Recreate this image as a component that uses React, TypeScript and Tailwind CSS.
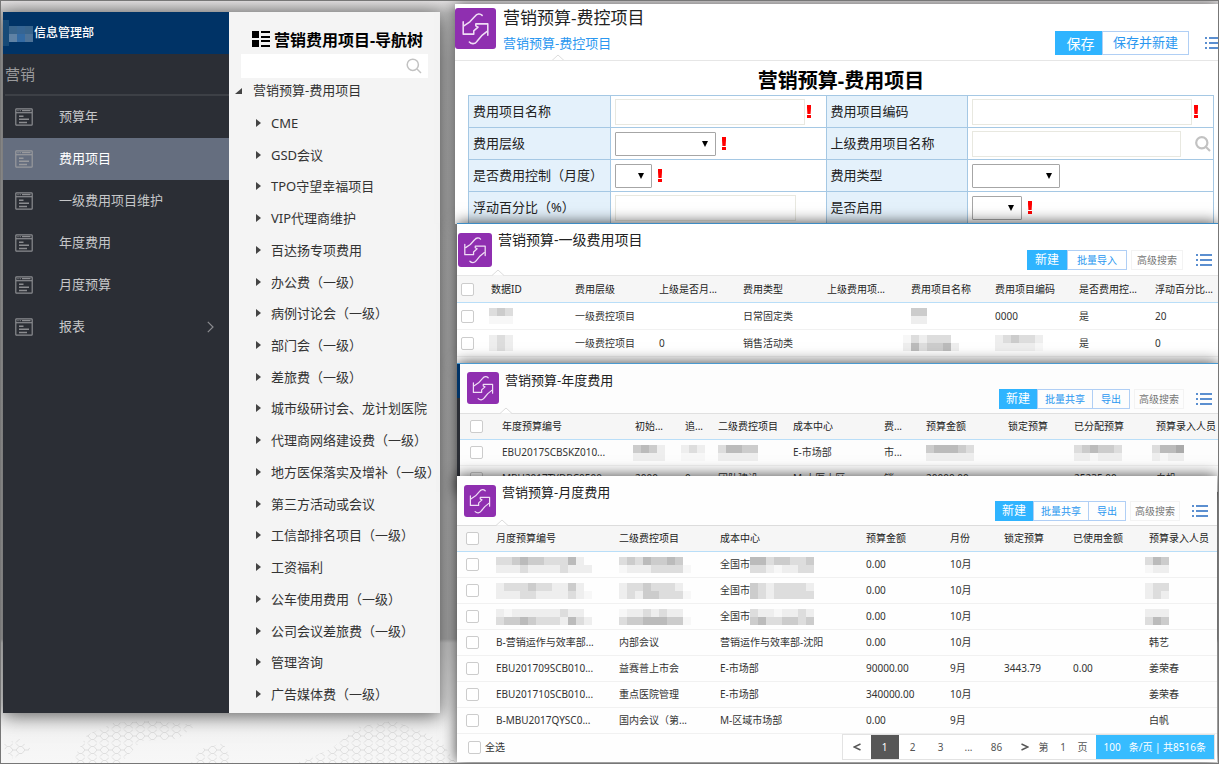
import React from "react";

const FONT = "font-['Noto_Sans','Noto_Sans_CJK_SC',sans-serif]";

function AppMark({ className }: { className: string }) {
  return (
    <span className={`flex shrink-0 items-center justify-center rounded-[3px] bg-[#8f2fb0] ${className}`}>
      <svg viewBox="0 0 40 40" className="h-full w-full" fill="none" stroke="#f0def5" strokeWidth="1.5" strokeLinejoin="round" strokeLinecap="round" aria-hidden="true">
        <path d="M26.5 7.2C24.5 5.2 21.5 5.4 19.5 8L14.5 13.5L9 17.2" />
        <path d="M8 13.5V25.5H18.3V22.3L22.5 18.6L20.3 17.4V15.5H32V26.5" />
        <path d="M31 23L26 27L21.5 32.5C19.5 35.4 16 35.4 14 33.2" />
      </svg>
    </span>
  );
}

function Notch({ className }: { className: string }) {
  return (
    <svg viewBox="0 0 12 7" className={`absolute -bottom-px h-[7px] w-3 ${className}`} aria-hidden="true">
      <path d="M0 6.5L6 1L12 6.5" fill="#fff" stroke="#dcdcdc" />
    </svg>
  );
}

function ListIcon() {
  return (
    <svg viewBox="0 0 16 14" className="h-3.5 w-4 shrink-0" fill="#5b8fd0" role="img" aria-label="列表">
      <path d="M0 1h2v2H0zM4 1h12v2H4zM0 6h2v2H0zM4 6h12v2H4zM0 11h2v2H0zM4 11h12v2H4z" />
    </svg>
  );
}

function SearchIcon({ className, width }: { className: string; width: number }) {
  return (
    <svg viewBox="0 0 16 16" className={className} fill="none" stroke="#c2c2c2" strokeWidth={width} aria-hidden="true">
      <circle cx="6.8" cy="6.8" r="5.6" />
      <path d="M11 11l4 4" />
    </svg>
  );
}

/* Faint honeycomb printed on the desktop behind the windows. */
function Honeycomb() {
  return (
    <svg className="absolute bottom-0 left-0 h-12 w-[455px]" aria-hidden="true">
      <defs>
        <pattern id="comb" width="12" height="14" patternUnits="userSpaceOnUse">
          <path d="M3 0.5L6 3.5L9 3.5L12 0.5M6 3.5L3 7L6 10.5H9L12 7L9 3.5M0 7H3M3 13.5L6 10.5M9 10.5L12 13.5" fill="none" stroke="#dedede" />
        </pattern>
      </defs>
      <path d="M70 48L86 20L112 8L150 6L196 10L176 24L140 26L120 48Z" fill="url(#comb)" />
      <path d="M190 48L200 34L222 28L232 48Z" fill="url(#comb)" />
      <path d="M296 48L330 34L356 12L392 6L420 16L440 26L455 48Z" fill="url(#comb)" />
      <path d="M0 30L18 24L30 34L12 44Z" fill="url(#comb)" />
    </svg>
  );
}

/* A masked value: each hex digit is the grey level of one 8px block. */
function Mask({ rows, className = "" }: { rows: string[]; className?: string }) {
  const w = Math.max(...rows.map((r) => r.length)) * 8;
  const h = rows.length * 8;
  return (
    <svg width={w} height={h} viewBox={`0 0 ${w} ${h}`} className={`inline-block shrink-0 align-middle ${className}`} shapeRendering="crispEdges" aria-hidden="true">
      {rows.map((row, y) =>
        row.split("").map((c, x) => (
          <rect key={`${x}-${y}`} x={x * 8} y={y * 8} width="8" height="8" fill={c === "f" ? "#f7f7f7" : `#${c}${c}${c}`} />
        ))
      )}
    </svg>
  );
}

function Check({ label }: { label: string }) {
  return (
    <input type="checkbox" aria-label={label} className="block h-[13px] w-[13px] appearance-none rounded-[2px] border border-[#cccccc] bg-white checked:bg-[#2fb4ff]" />
  );
}

const MENU = ["预算年", "费用项目", "一级费用项目维护", "年度费用", "月度预算", "报表"];

function Sidebar() {
  return (
    <nav className="w-[226px] shrink-0 bg-[#2b2e35]">
      <div className="flex h-[42px] items-center bg-[#003366] text-[12px] font-medium text-white">
        <svg width="31" height="26" viewBox="0 0 31 26" className="shrink-0" shapeRendering="crispEdges" aria-hidden="true">
          <path fill="#174a77" d="M0 0h6v26H0z" />
          <path fill="#38648c" d="M6 6h8v8H6zM22 6h8v8h-8z" />
          <path fill="#366593" d="M14 6h8v8h-8z" />
          <path fill="#4d7297" d="M22 14h8v8h-8z" />
          <path fill="#5f82a5" d="M6 14h8v8H6z" />
          <path fill="#336aa3" d="M14 14h8v8h-8z" />
        </svg>
        <span>信息管理部</span>
      </div>
      <div className="ml-0.5 flex h-[42px] items-center border-b-2 border-[#3d4046] text-[15px] text-[#9a9a9c]">营销</div>
      <ul>
        {MENU.map((m, i) => (
          <li key={m}>
            <a href="#" className={`flex h-[42px] items-center pl-3 pr-[15px] text-[13px] ${i === 1 ? "bg-[#656e7f] text-white" : "text-[#c6c7c9]"}`}>
              <svg viewBox="0 0 18 18" className="h-[18px] w-[18px] shrink-0" fill="none" stroke={i === 1 ? "#98999d" : "#8b8c90"} strokeWidth="1.2" aria-hidden="true">
                <rect x="0.8" y="0.8" width="16.4" height="16.4" rx="0.8" />
                <path d="M1 4.7h16" />
                <path d="M2.5 2.7h1M4.7 2.7h1M7 2.7h8.5" />
                <path d="M4 8.3h4.5M4 11.2h10M4 14.5h8" strokeWidth="1.5" />
              </svg>
              <span className="flex-1 pl-[26px]">{m}</span>
              {i === 5 && (
                <svg viewBox="0 0 7 12" className="h-3 w-[7px]" fill="none" stroke="#8b8c90" strokeWidth="1.2" aria-hidden="true">
                  <path d="M0.8 0.8L6 6L0.8 11.2" />
                </svg>
              )}
            </a>
          </li>
        ))}
      </ul>
    </nav>
  );
}

const TREE = [
  "CME", "GSD会议", "TPO守望幸福项目", "VIP代理商维护", "百达扬专项费用", "办公费（一级）", "病例讨论会（一级）",
  "部门会（一级）", "差旅费（一级）", "城市级研讨会、龙计划医院", "代理商网络建设费（一级）", "地方医保落实及增补（一级）",
  "第三方活动或会议", "工信部排名项目（一级）", "工资福利", "公车使用费用（一级）", "公司会议差旅费（一级）", "管理咨询", "广告媒体费（一级）",
];

function TreePanel() {
  return (
    <section className="flex w-[211px] shrink-0 flex-col bg-[#f4f4f4] pb-[3px]">
      <h2 className="flex h-[42px] items-end gap-1 whitespace-nowrap pl-[23px] text-[16px] font-bold leading-7 text-black">
        <svg viewBox="0 0 18 16" className="mb-[7px] h-4 w-[18px] shrink-0" aria-hidden="true">
          <path d="M0 0h7v7H0zM0 9h7v7H0zM9 0h9v2H9zM9 5h9v2H9zM9 9h9v2H9zM9 14h9v2H9z" />
        </svg>
        营销费用项目-导航树
      </h2>
      <label className="ml-3 mr-3 flex h-6 items-center bg-white pr-1.5">
        <input type="text" aria-label="搜索" className="min-w-0 flex-1 bg-transparent px-2 text-[13px] outline-none" />
        <SearchIcon className="h-4 w-4" width={1.5} />
      </label>
      <div className="mb-[3px] flex h-[26px] items-center pl-1.5 text-[13px] text-[#333]">
        <svg viewBox="0 0 7 6" className="h-1.5 w-[7px]" aria-hidden="true">
          <path d="M7 0V6H0z" fill="#444" />
        </svg>
        <span className="pl-[11px]">营销预算-费用项目</span>
      </div>
      <ul className="flex flex-1 flex-col text-[13px] leading-5 text-[#333]">
        {TREE.map((t) => (
          <li key={t} className="flex flex-1 items-center whitespace-nowrap pl-[27px]">
            <svg viewBox="0 0 5 8" className="mr-2.5 h-2 w-[5px] shrink-0" aria-hidden="true">
              <path d="M0 0L5 4L0 8z" fill="#444" />
            </svg>
            {t}
          </li>
        ))}
      </ul>
    </section>
  );
}

const Bang = () => (
  <svg viewBox="0 0 4 13" className="h-[13px] w-1 shrink-0" fill="#f00" aria-label="必填" role="img">
    <path d="M0 0h4v3L3.6 9H0.4L0 3zM0 10h4v3H0z" />
  </svg>
);

function Picker({ id, className }: { id: string; className: string }) {
  return (
    <span className={`relative inline-flex ${className}`}>
      <select id={id} className="h-6 w-full appearance-none rounded-[1px] border border-[#a6a6a6] bg-white">
        <option value=""></option>
      </select>
      <svg viewBox="0 0 6 6" className="pointer-events-none absolute right-2 top-[9px] h-1.5 w-1.5" aria-hidden="true">
        <path d="M0 0h6L3 6z" fill="#000" />
      </svg>
    </span>
  );
}

const TH = "border border-[#a5c8e4] bg-[#e4f1fb] pl-1 text-left font-normal";
const TD = "border border-[#a5c8e4] px-1";
const BOX = "h-[26px] min-w-0 border border-[#e8e8e0] bg-white px-1 outline-none";

function FormPanel() {
  return (
    <section className="relative bg-white shadow-[0_0_14px_rgba(0,0,0,0.55)]">
      <header className="relative flex h-[57px] overflow-hidden border-b border-[#e6e6e6]">
        <AppMark className="mt-1 h-[41px] w-[41px]" />
        <div className="flex-1 pl-[7px]">
          <h1 className="text-[17px] leading-7 text-[#222]">营销预算-费控项目</h1>
          <a href="#" className="block w-max text-[13px] leading-[22px] text-[#2a97f0]">营销预算-费控项目</a>
        </div>
        <div className="-mr-[3px] mt-[27px] flex h-6 items-center">
          <button type="button" className="h-full w-[47px] bg-[#2fb4ff] pl-1 text-[14px] text-white">保存</button>
          <button type="button" className="mr-4 h-full w-[87px] border border-[#b0cff5] text-[13px] text-[#2a97f0]">保存并新建</button>
          <ListIcon />
        </div>
        <Notch className="left-[97px]" />
      </header>
      <div className="pl-[13px] pr-1">
        <h2 className="h-[34px] text-center text-[20px] font-bold leading-10 text-black">营销预算-费用项目</h2>
        <table className="w-full table-fixed border-collapse text-[13px] text-[#222]">
          <colgroup>
            <col className="w-[19%]" />
            <col className="w-[29%]" />
            <col className="w-[19%]" />
            <col className="w-[33%]" />
          </colgroup>
          <tbody>
            <tr className="h-8">
              <th className={TH}><label htmlFor="name">费用项目名称</label></th>
              <td className={TD}><div className="flex items-center gap-0.5 pr-[11px]"><input id="name" className={`${BOX} flex-1`} /><Bang /></div></td>
              <th className={TH}><label htmlFor="code">费用项目编码</label></th>
              <td className={TD}><div className="flex items-center gap-0.5 pr-[11px]"><input id="code" className={`${BOX} flex-1`} /><Bang /></div></td>
            </tr>
            <tr className="h-8">
              <th className={TH}><label htmlFor="level">费用层级</label></th>
              <td className={TD}><div className="flex items-center gap-1.5"><Picker id="level" className="w-[101px]" /><Bang /></div></td>
              <th className={TH}><label htmlFor="parent">上级费用项目名称</label></th>
              <td className={TD}><div className="flex items-center gap-3.5"><input id="parent" className={`${BOX} flex-1`} /><SearchIcon className="-mr-0.5 h-4 w-4" width={2.2} /></div></td>
            </tr>
            <tr className="h-8">
              <th className={TH}><label htmlFor="control">是否费用控制（月度）</label></th>
              <td className={TD}><div className="flex items-center gap-1.5"><Picker id="control" className="w-[37px]" /><Bang /></div></td>
              <th className={TH}><label htmlFor="kind">费用类型</label></th>
              <td className={TD}><div className="flex items-center"><Picker id="kind" className="w-[88px]" /></div></td>
            </tr>
            <tr className="h-8">
              <th className={TH}><label htmlFor="float">浮动百分比（%）</label></th>
              <td className={TD}><div className="flex pr-[26px]"><input id="float" className={`${BOX} flex-1`} /></div></td>
              <th className={TH}><label htmlFor="enabled">是否启用</label></th>
              <td className={TD}><div className="flex items-center gap-1.5"><Picker id="enabled" className="w-[50px]" /><Bang /></div></td>
            </tr>
          </tbody>
        </table>
      </div>
    </section>
  );
}

function Actions({ items, className, search }: { items: { t: string; w: string }[]; className: string; search: string }) {
  return (
    <div className={`flex h-5 items-center text-[10px] ${className}`}>
      {items.map((b, i) => (
        <button key={b.t} type="button" className={`h-full ${b.w} ${i === 0 ? "bg-[#2fb4ff] text-[12px] leading-5 text-white" : i === 1 ? "border border-[#b0cff5] text-[#2a97f0]" : "border border-l-0 border-[#b0cff5] text-[#2a97f0]"}`}>
          {b.t}
        </button>
      ))}
      <button type="button" className={`ml-1 h-full border border-[#f3f3f3] text-[#777] ${search}`}>高级搜索</button>
      <ListIcon />
    </div>
  );
}

type Cell = React.ReactNode;

function DataTable({ cols, heads, rows, rowClass, headClass, padClass }: { cols: string[]; heads: string[]; rows: Cell[][]; rowClass: string; headClass: string; padClass: string }) {
  return (
    <table className="w-full table-fixed border-separate border-spacing-0 text-left text-[10px] text-[#333]">
      <colgroup>
        {cols.map((c, i) => (
          <col key={i} className={c} />
        ))}
      </colgroup>
      <thead>
        <tr className={`bg-[#f6f6f6] ${headClass}`}>
          <th className={`border-b border-[#b9def8] ${padClass}`}><Check label="选择全部" /></th>
          {heads.map((h) => (
            <th key={h} className="whitespace-nowrap border-b border-[#b9def8] font-normal text-[#222]">{h}</th>
          ))}
        </tr>
      </thead>
      <tbody>
        {rows.map((r, i) => (
          <tr key={i} className={rowClass}>
            <td className={`border-b border-[#f1f1f1] ${padClass}`}><Check label={`选择第${i + 1}行`} /></td>
            {r.map((c, j) => (
              <td key={j} className="whitespace-nowrap border-b border-[#f1f1f1]">{c}</td>
            ))}
          </tr>
        ))}
      </tbody>
    </table>
  );
}

function LevelOnePanel() {
  return (
    <section className="relative -mt-px ml-0.5 border-t border-[#3d8cc4] bg-white pb-1.5 shadow-[0_0_14px_rgba(0,0,0,0.75)]">
      <header className="relative flex h-[52px] border-b border-[#e6e6e6] pl-px">
        <AppMark className="mt-[9px] h-[34px] w-[34px]" />
        <h2 className="flex-1 pl-1.5 text-[14px] leading-8 text-[#222]">营销预算-一级费用项目</h2>
        <Actions className="mr-1.5 mt-[26px]" search="w-[52px] mr-[13px]" items={[{ t: "新建", w: "w-10" }, { t: "批量导入", w: "w-[60px]" }]} />
        <Notch className="left-[35px]" />
      </header>
      <DataTable
        headClass="h-[27px]"
        rowClass="h-[27px]"
        padClass="pl-1"
        cols={["w-[34px]", "w-[84px]", "w-[84px]", "w-[84px]", "w-[84px]", "w-[84px]", "w-[84px]", "w-[84px]", "w-[76px]", ""]}
        heads={["数据ID", "费用层级", "上级是否月...", "费用类型", "上级费用项...", "费用项目名称", "费用项目编码", "是否费用控...", "浮动百分比..."]}
        rows={[
          [<Mask className="-ml-0.5" rows={["dcd", "fff"]} />, "一级费控项目", "", "日常固定类", "", <Mask rows={["cc", "ee"]} />, "0000", "是", "20"],
          [<Mask className="-ml-0.5" rows={["ede", "ede"]} />, "一级费控项目", "0", "销售活动类", "", <Mask className="-ml-2" rows={["fdeddd", "ebdccbe"]} />, <Mask rows={["edcdde", "eeeeef"]} />, "是", "0"],
        ]}
      />
    </section>
  );
}

function YearPanel() {
  return (
    <section className="relative ml-0.5 flex border-t border-[#4a9ad0] bg-[#fdfdfd] shadow-[0_0_14px_rgba(0,0,0,0.75)]">
      <div className="w-[3px] shrink-0 bg-[linear-gradient(#003366_34px,#2b2e35_34px)]" />
      <div className="min-w-0 flex-1">
        <header className="relative flex h-[50px] border-b border-[#e0e0e0] pl-[7px]">
          <AppMark className="mt-2 h-8 w-8" />
          <h2 className="flex-1 pl-1.5 text-[13px] leading-8 text-[#222]">营销预算-年度费用</h2>
          <Actions className="mr-1.5 mt-[25px]" search="w-[50px] mr-3" items={[{ t: "新建", w: "w-[38px]" }, { t: "批量共享", w: "w-14" }, { t: "导出", w: "w-[37px]" }]} />
          <Notch className="left-10" />
        </header>
        <DataTable
          headClass="h-[26px]"
          rowClass="h-[26px]"
          padClass="pl-2.5"
          cols={["w-[42px]", "w-[133px]", "w-[50px]", "w-[33px]", "w-[75px]", "w-[91px]", "w-[42px]", "w-[82px]", "w-[66px]", "w-[82px]", ""]}
          heads={["年度预算编号", "初始...", "追...", "二级费控项目", "成本中心", "费...", "预算金额", "锁定预算", "已分配预算", "预算录入人员"]}
          rows={[
            ["EBU2017SCBSKZ010...", <Mask className="-ml-0.5" rows={["cbce", "eeee"]} />, <Mask className="-ml-1" rows={["ede", "fff"]} />, <Mask rows={["dbbcc", "eeeee"]} />, "E-市场部", "市...", <Mask rows={["cbbbcd", "eeeeee"]} />, "", <Mask rows={["dcbccd", "eefeee"]} />, <Mask className="-ml-1" rows={["dbba", "efee"]} />],
            ["MBU2017TYDBC0500...", "2000", "0", "团队建设", "M-大医大区", "销...", "20000.00", "", "25235.00", "白帆"],
          ]}
        />
      </div>
    </section>
  );
}

const masked = (a: string[], b: string[], c: string[], d: string[]): Cell[] => [
  <Mask rows={a} />,
  <Mask rows={b} />,
  <span className="flex items-center">全国市<Mask rows={c} /></span>,
  "0.00",
  "10月",
  "",
  "",
  <Mask className="-ml-1" rows={d} />,
];

function Chevron({ d }: { d: string }) {
  return (
    <svg viewBox="0 0 8 8" className="h-2 w-2" fill="none" stroke="#555" strokeWidth="1.4" aria-hidden="true">
      <path d={d} />
    </svg>
  );
}

function MonthPanel() {
  const cell = "flex h-full w-7 items-center justify-center";
  return (
    <section className="relative -mt-4 ml-0.5 mr-px bg-[#fefefe] pb-0.5 shadow-[0_0_14px_rgba(0,0,0,0.75)]">
      <header className="relative flex h-[50px] border-b border-[#dcdcdc] pl-[7px]">
        <AppMark className="mt-[9px] h-8 w-8" />
        <h2 className="flex-1 pl-1.5 text-[13px] leading-8 text-[#222]">营销预算-月度费用</h2>
        <Actions className="mr-[9px] mt-[25px]" search="w-[50px] mr-3" items={[{ t: "新建", w: "w-[38px]" }, { t: "批量共享", w: "w-14" }, { t: "导出", w: "w-[37px]" }]} />
        <Notch className="left-[39px]" />
      </header>
      <DataTable
        headClass="h-[26px]"
        rowClass="h-[26px]"
        padClass="pl-[9px]"
        cols={["w-[39px]", "w-[123px]", "w-[101px]", "w-[146px]", "w-[84px]", "w-[54px]", "w-[69px]", "w-[76px]", ""]}
        heads={["月度预算编号", "二级费控项目", "成本中心", "预算金额", "月份", "锁定预算", "已使用金额", "预算录入人员"]}
        rows={[
          masked(["ddcbccdddbe", "eeedeeeedeee"], ["dcdbccbc", "feeeddddf"], ["bbdccddc", "ddefeedd"], ["dbc", "fee"]),
          masked(["edddcddeece", "eeeddeeeedef"], ["eddcddde", "edeccdddf"], ["cdedddde", "cdeddddd"], ["edd", "ede"]),
          masked(["efeeeeeedee", "dccbcdddebde"], ["feededee", "dccbbbccf"], ["deefeede", "cbddccdc"], ["eee", "dbc"]),
          ["B-营销运作与效率部...", "内部会议", "营销运作与效率部-沈阳", "0.00", "10月", "", "", "韩艺"],
          ["EBU201709SCB010...", "益赛普上市会", "E-市场部", "90000.00", "9月", "3443.79", "0.00", "姜荣春"],
          ["EBU201710SCB010...", "重点医院管理", "E-市场部", "340000.00", "10月", "", "", "姜荣春"],
          ["B-MBU2017QYSC0...", "国内会议（第...", "M-区域市场部", "0.00", "9月", "", "", "白帆"],
        ]}
      />
      <footer className="flex h-[26px] items-center justify-between pl-[11px] pr-0.5 text-[10px] text-[#555]">
        <label className="flex items-center gap-1 text-[#333]">
          <Check label="全选" />
          全选
        </label>
        <div className="flex h-full items-center border border-[#e3e3e3] bg-white">
          <button type="button" className={cell} aria-label="上一页"><Chevron d="M7.5 1L1 4L7.5 7" /></button>
          <button type="button" className={`${cell} bg-[#575757] text-white`}>1</button>
          <button type="button" className={cell}>2</button>
          <button type="button" className={cell}>3</button>
          <span className={cell}>...</span>
          <button type="button" className={cell}>86</button>
          <button type="button" className={cell} aria-label="下一页"><Chevron d="M0.5 1L7 4L0.5 7" /></button>
          <label className="flex items-center pr-2">
            第
            <input type="text" defaultValue="1" className="w-[29px] bg-transparent text-center outline-none" />
            页
          </label>
          <button type="button" className="flex h-full items-center gap-2 bg-[#37bcff] px-2 text-white">
            <span>100</span>
            <span>条/页 | 共8516条</span>
          </button>
        </div>
      </footer>
    </section>
  );
}

export default function App() {
  return (
    <main lang="zh-CN" className={`relative flex min-h-screen items-stretch overflow-hidden border border-[#777] bg-[linear-gradient(#e2e0e1_0px,#c4c4c4_12px,#b4b4b4_60px,#b0b0b0_638px,#d2d2d2_642px,#f3f3f3_720px,#f7f7f7_100%)] ${FONT}`}>
      <Honeycomb />
      <div className="relative mb-[50px] ml-0.5 mt-[11px] flex shrink-0 shadow-[0_3px_18px_rgba(0,0,0,0.6)]">
        <Sidebar />
        <TreePanel />
      </div>
      <div className="ml-[15px] mt-[3px] min-w-0 flex-1">
        <FormPanel />
        <LevelOnePanel />
        <YearPanel />
        <MonthPanel />
      </div>
    </main>
  );
}
